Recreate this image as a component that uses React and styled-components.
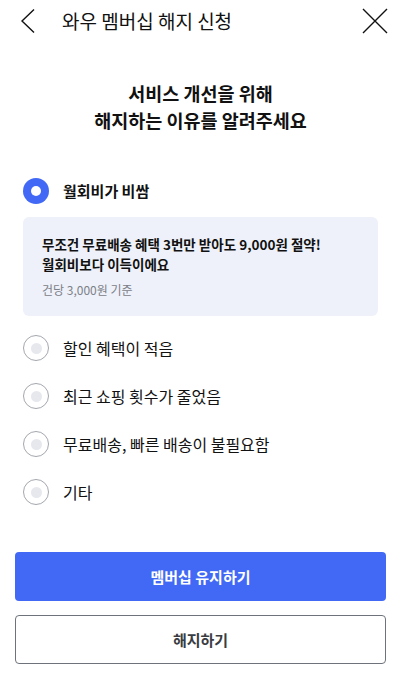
import React, { useState } from "react";
import styled, { createGlobalStyle } from "styled-components";

const Global = createGlobalStyle`
  html, body { margin: 0; padding: 0; background: #fff; }
  body { font-family: "Noto Sans CJK KR", "Noto Sans", sans-serif; color: #111; }
  * { box-sizing: border-box; }
`;

const Page = styled.div`
  width: 401px;
  height: 691px;
  display: flex;
  flex-direction: column;
  background: #fff;
`;

const Header = styled.header`
  height: 42px;
  display: flex;
  align-items: center;
  padding: 0 12px 0 14px;
`;

const IconButton = styled.button`
  border: 0;
  background: none;
  padding: 0;
  width: 28px;
  height: 28px;
  display: flex;
  align-items: center;
  justify-content: center;
  color: #111;
`;

const Title = styled.h1`
  flex: 1;
  margin: 0 0 0 20px;
  font-size: 19px;
  font-weight: 400;
  line-height: 24px;
  color: #111;
`;

const Heading = styled.h2`
  margin: 38px 0 0;
  text-align: center;
  font-size: 18.5px;
  font-weight: 700;
  line-height: 27px;
  color: #111;
`;

const List = styled.div`
  display: flex;
  flex-direction: column;
  margin-top: 33px;
`;

const Row = styled.label`
  height: 48px;
  display: flex;
  align-items: center;
  gap: 14px;
  padding: 0 23px;
  cursor: pointer;
`;

const Radio = styled.span`
  width: 26px;
  height: 26px;
  border-radius: 50%;
  flex-shrink: 0;
  display: flex;
  align-items: center;
  justify-content: center;
  background: ${(p) => (p.$checked ? "#4169f5" : "#fff")};
  border: ${(p) => (p.$checked ? "0" : "1.5px solid #a3a7ae")};
  &::after {
    content: "";
    width: ${(p) => (p.$checked ? "10px" : "11px")};
    height: ${(p) => (p.$checked ? "10px" : "11px")};
    border-radius: 50%;
    background: ${(p) => (p.$checked ? "#fff" : "#e6e8ed")};
  }
`;

const Label = styled.span`
  font-size: ${(p) => (p.$checked ? "15px" : "16px")};
  font-weight: ${(p) => (p.$checked ? 700 : 400)};
  color: #111;
  line-height: 22px;
`;

const InfoBox = styled.div`
  margin: 2px 23px 8px;
  padding: 17px 19px 17px;
  background: #eef1f9;
  border-radius: 6px;
`;

const InfoMain = styled.p`
  margin: 0;
  font-size: 13.5px;
  font-weight: 700;
  line-height: 20px;
  color: #111;
`;

const InfoSub = styled.p`
  margin: 7px 0 0;
  font-size: 12px;
  line-height: 18px;
  color: #7c8088;
`;

const Actions = styled.div`
  display: flex;
  flex-direction: column;
  gap: 14px;
  padding: 0 15px;
  margin-top: 36px;
`;

const Button = styled.button`
  height: 49px;
  border-radius: 4px;
  font-family: inherit;
  font-size: 15px;
  font-weight: 700;
  cursor: pointer;
  background: ${(p) => (p.$primary ? "#4169f5" : "#fff")};
  color: ${(p) => (p.$primary ? "#fff" : "#3a3d42")};
  border: ${(p) => (p.$primary ? "0" : "1.5px solid #6e737b")};
`;

const reasons = [
  "월회비가 비쌈",
  "할인 혜택이 적음",
  "최근 쇼핑 횟수가 줄었음",
  "무료배송, 빠른 배송이 불필요함",
  "기타",
];

export default function App() {
  const [selected, setSelected] = useState(0);
  return (
    <Page>
      <Global />
      <Header>
        <IconButton aria-label="back">
          <svg width="16" height="26" viewBox="0 0 16 26" fill="none">
            <path d="M14 1.5 L2 13 L14 24.5" stroke="#111" strokeWidth="1.4" />
          </svg>
        </IconButton>
        <Title>와우 멤버십 해지 신청</Title>
        <IconButton aria-label="close">
          <svg width="26" height="26" viewBox="0 0 26 26" fill="none">
            <path d="M1 1 L25 25 M25 1 L1 25" stroke="#111" strokeWidth="1.4" />
          </svg>
        </IconButton>
      </Header>
      <Heading>
        서비스 개선을 위해
        <br />
        해지하는 이유를 알려주세요
      </Heading>
      <List>
        {reasons.map((r, i) => (
          <React.Fragment key={r}>
            <Row onClick={() => setSelected(i)}>
              <Radio $checked={selected === i} />
              <Label $checked={selected === i}>{r}</Label>
            </Row>
            {i === 0 && selected === 0 && (
              <InfoBox>
                <InfoMain>
                  무조건 무료배송 혜택 3번만 받아도 9,000원 절약!
                  <br />
                  월회비보다 이득이에요
                </InfoMain>
                <InfoSub>건당 3,000원 기준</InfoSub>
              </InfoBox>
            )}
          </React.Fragment>
        ))}
      </List>
      <Actions>
        <Button $primary>멤버십 유지하기</Button>
        <Button>해지하기</Button>
      </Actions>
    </Page>
  );
}
